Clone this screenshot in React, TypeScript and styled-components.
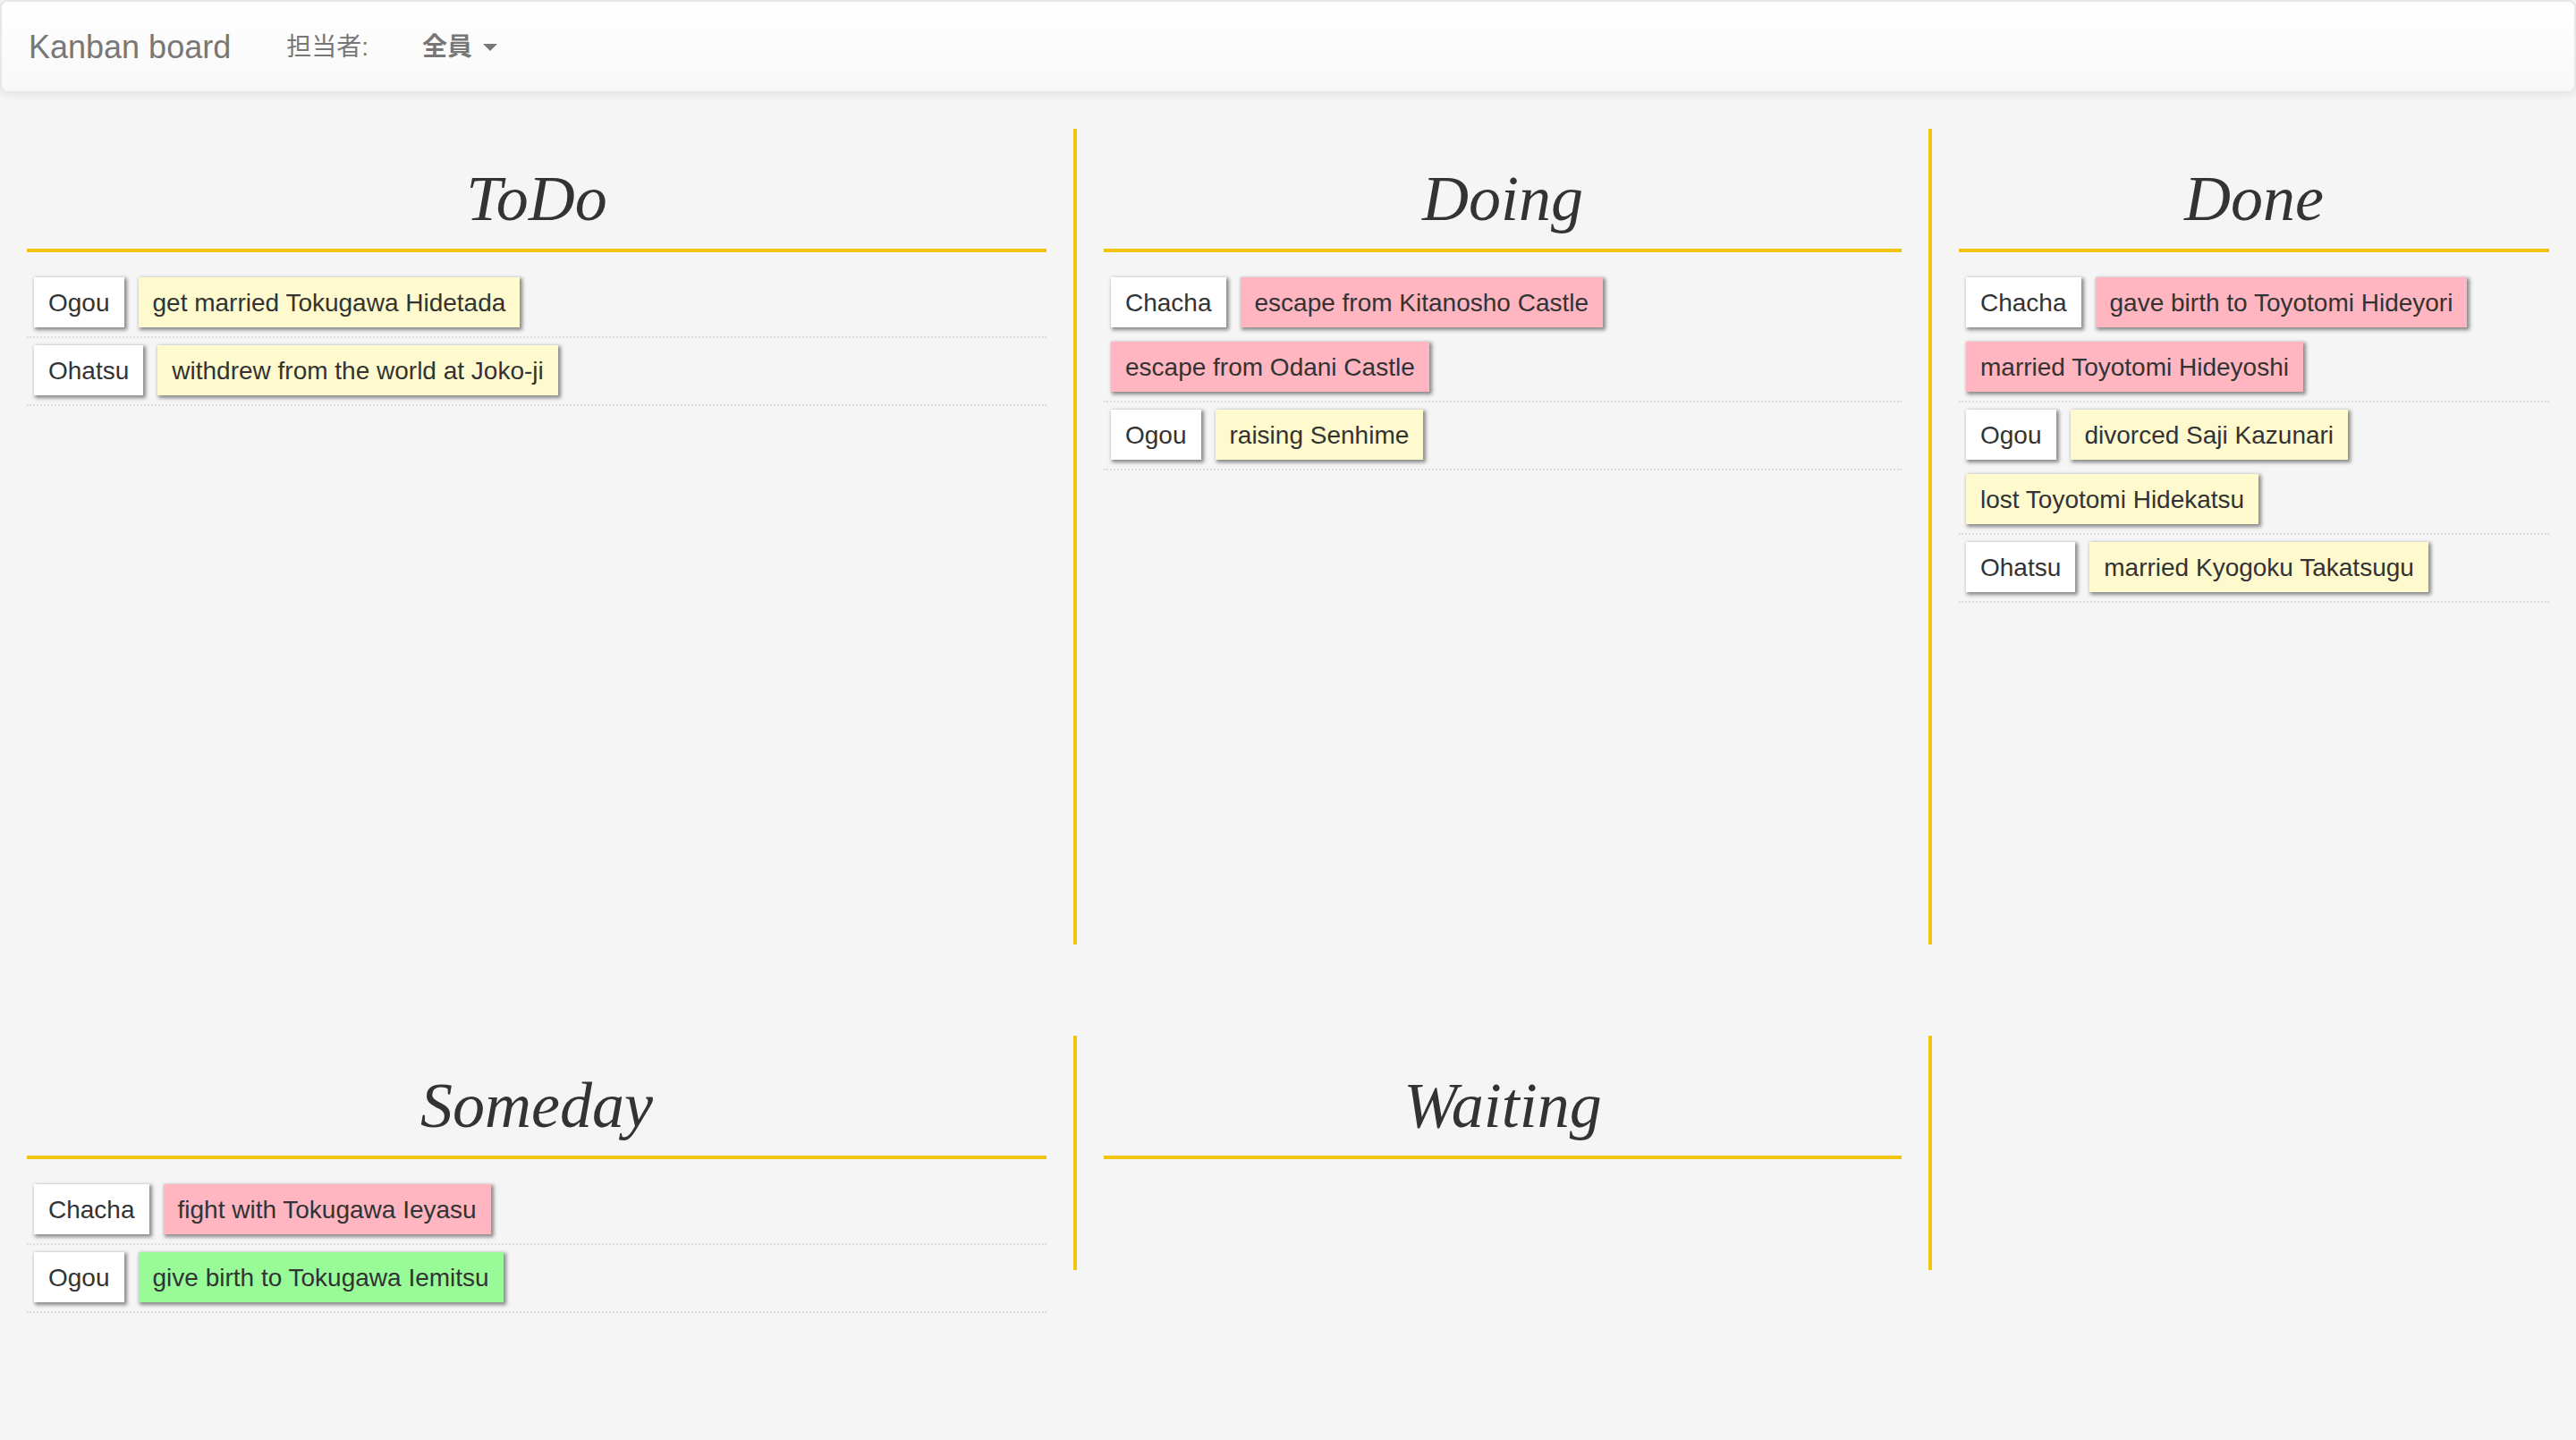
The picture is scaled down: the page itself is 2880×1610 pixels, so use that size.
import React, { useState } from "react";
import styled, { createGlobalStyle } from "styled-components";

type Tone = "lemon" | "pink" | "green";
type Task = { title: string; tone: Tone };
type Lane = { owner: string; tasks: Task[] };
type Stage = { name: string; lanes: Lane[] };

const tones: Record<Tone, string> = {
  lemon: "#fffacd",
  pink: "#ffb6c1",
  green: "#98fb98",
};

const EVERYONE = "全員";
const owners = ["Chacha", "Ogou", "Ohatsu"];

const active: Stage[] = [
  {
    name: "ToDo",
    lanes: [
      { owner: "Ogou", tasks: [{ title: "get married Tokugawa Hidetada", tone: "lemon" }] },
      { owner: "Ohatsu", tasks: [{ title: "withdrew from the world at Joko-ji", tone: "lemon" }] },
    ],
  },
  {
    name: "Doing",
    lanes: [
      {
        owner: "Chacha",
        tasks: [
          { title: "escape from Kitanosho Castle", tone: "pink" },
          { title: "escape from Odani Castle", tone: "pink" },
        ],
      },
      { owner: "Ogou", tasks: [{ title: "raising Senhime", tone: "lemon" }] },
    ],
  },
  {
    name: "Done",
    lanes: [
      {
        owner: "Chacha",
        tasks: [
          { title: "gave birth to Toyotomi Hideyori", tone: "pink" },
          { title: "married Toyotomi Hideyoshi", tone: "pink" },
        ],
      },
      {
        owner: "Ogou",
        tasks: [
          { title: "divorced Saji Kazunari", tone: "lemon" },
          { title: "lost Toyotomi Hidekatsu", tone: "lemon" },
        ],
      },
      { owner: "Ohatsu", tasks: [{ title: "married Kyogoku Takatsugu", tone: "lemon" }] },
    ],
  },
];

const parked: Stage[] = [
  {
    name: "Someday",
    lanes: [
      { owner: "Chacha", tasks: [{ title: "fight with Tokugawa Ieyasu", tone: "pink" }] },
      { owner: "Ogou", tasks: [{ title: "give birth to Tokugawa Iemitsu", tone: "green" }] },
    ],
  },
  { name: "Waiting", lanes: [] },
];

const GlobalStyle = createGlobalStyle`
  *, *::before, *::after { box-sizing: border-box; }
  body {
    margin: 0;
    background: #f5f5f5;
    color: #333;
    font: 28px/40px "Helvetica Neue", "Liberation Sans", "Noto Sans CJK JP", sans-serif;
  }
`;

const Navbar = styled.header`
  display: flex;
  align-items: center;
  height: 104px;
  padding: 2px 30px 0;
  border: 2px solid #e7e7e7;
  border-radius: 8px;
  background: linear-gradient(to bottom, #fff, #f8f8f8);
  background-clip: padding-box;
  box-shadow: 0 2px 10px rgba(0, 0, 0, 0.075);
  color: #777;
`;

const Brand = styled.a`
  margin-right: 62px;
  color: inherit;
  font-size: 36px;
  text-decoration: none;
`;

const FilterLabel = styled.label`
  margin-right: 60px;
`;

const FilterBox = styled.span`
  display: flex;
  align-items: center;
  gap: 12px;
`;

const FilterSelect = styled.select`
  appearance: none;
  field-sizing: content;
  padding: 0;
  border: 0;
  background: none;
  color: inherit;
  font: inherit;
  font-weight: 700;
  cursor: pointer;
`;

const Caret = styled.span`
  border-top: 8px solid;
  border-right: 8px solid transparent;
  border-left: 8px solid transparent;
  pointer-events: none;
`;

const Board = styled.main`
  display: grid;
  gap: 102px;
  padding: 40px 0;
`;

const StageRow = styled.div<{ $height: number }>`
  display: grid;
  grid-template-columns: 5fr 4fr 3fr;
  align-items: start;

  > * {
    min-height: ${(p) => p.$height}px;
  }
`;

const StageColumn = styled.section`
  min-width: 0;
  padding: 0 30px;

  &:nth-child(2) {
    border: solid #f1c40f;
    border-width: 0 4px;
  }
`;

const StageTitle = styled.h1`
  margin: 0 0 20px;
  padding: 38px 0 16px;
  border-bottom: 4px solid #f1c40f;
  font: italic 400 72px/80px "Apple Chancery", "Liberation Serif", serif;
  text-align: center;
`;

const LaneList = styled.ul`
  display: flex;
  flex-wrap: wrap;
  margin: 0;
  padding: 0 0 2px;
  border-bottom: 2px dotted #ddd;
  list-style: none;
`;

const Note = styled.li<{ $tone?: Tone }>`
  margin: 8px;
  padding: 9px 16px 7px;
  background: ${(p) => (p.$tone ? tones[p.$tone] : "#fff")};
  box-shadow: 2px 2px 4px 1px #888;
`;

function StageView({ stage, owner }: { stage: Stage; owner: string }) {
  const lanes = stage.lanes.filter((l) => owner === EVERYONE || l.owner === owner);
  return (
    <StageColumn>
      <StageTitle>{stage.name}</StageTitle>
      {lanes.map((lane) => (
        <LaneList key={lane.owner}>
          <Note>{lane.owner}</Note>
          {lane.tasks.map((task) => (
            <Note key={task.title} $tone={task.tone}>
              {task.title}
            </Note>
          ))}
        </LaneList>
      ))}
    </StageColumn>
  );
}

export default function App() {
  const [owner, setOwner] = useState(EVERYONE);
  return (
    <>
      <GlobalStyle />
      <Navbar>
        <Brand href="#">Kanban board</Brand>
        <FilterLabel htmlFor="owner">担当者:</FilterLabel>
        <FilterBox>
          <FilterSelect id="owner" value={owner} onChange={(e) => setOwner(e.target.value)}>
            {[EVERYONE, ...owners].map((name) => (
              <option key={name}>{name}</option>
            ))}
          </FilterSelect>
          <Caret />
        </FilterBox>
      </Navbar>
      <Board>
        <StageRow $height={912}>
          {active.map((stage) => (
            <StageView key={stage.name} stage={stage} owner={owner} />
          ))}
        </StageRow>
        <StageRow $height={262}>
          {parked.map((stage) => (
            <StageView key={stage.name} stage={stage} owner={owner} />
          ))}
        </StageRow>
      </Board>
    </>
  );
}
